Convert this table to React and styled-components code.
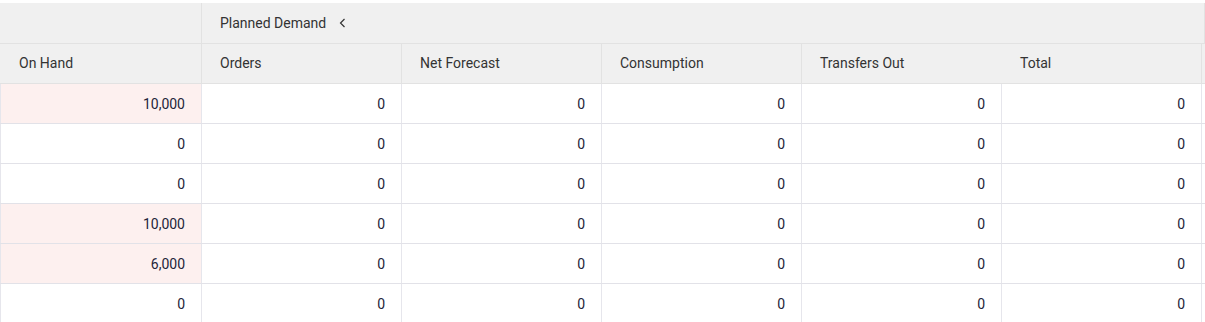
import React from "react";
import styled, { createGlobalStyle } from "styled-components";

const Global = createGlobalStyle`
  html, body { margin: 0; padding: 0; background: #fff; }
  body { font-family: Roboto, "Noto Sans", Arial, sans-serif; }
  * { box-sizing: border-box; }
`;

const Grid = styled.div`
  width: 1205px;
  padding-top: 3px;
  background: #fff;
  font-family: Roboto, Arial, sans-serif;
  font-size: 14px;
`;

const HeaderRow = styled.div`
  display: flex;
  height: ${(p) => p.$h}px;
  background: #f0f0f0;
  border-bottom: 1px solid #e2e2e2;
`;

const BodyRow = styled.div`
  display: flex;
  height: 40px;
  border-bottom: 1px solid #e2e2e8;
`;

const HeadCell = styled.div`
  width: ${(p) => p.$w}px;
  flex: ${(p) => (p.$grow ? "1 1 auto" : "0 0 auto")};
  display: flex;
  align-items: center;
  padding-left: ${(p) => p.$pl ?? 18}px;
  padding-bottom: ${(p) => p.$pb ?? 0}px;
  color: #333;
  font-weight: 400;
  border-right: ${(p) => (p.$noBorder ? "none" : "1px solid #e2e2e2")};
  white-space: nowrap;
`;

const Chevron = styled.svg`
  margin-left: 13px;
  width: 7px;
  height: 10px;
`;

const Cell = styled.div`
  width: ${(p) => p.$w}px;
  flex: 0 0 auto;
  display: flex;
  align-items: center;
  justify-content: flex-end;
  padding-right: ${(p) => p.$pr ?? 16}px;
  color: #24243a;
  background: ${(p) => (p.$pink ? "#fdf0ef" : "#fff")};
  border-left: ${(p) => (p.$first ? "1px solid #e6e6ec" : "none")};
  border-right: 1px solid #e6e6ec;
`;

const Filler = styled.div`
  flex: 1 1 auto;
`;

const onHand = [10000, 0, 0, 10000, 6000, 0];
const cols = ["Orders", "Net Forecast", "Consumption", "Transfers Out", "Total"];

const fmt = (n) => n.toLocaleString("en-US");

export default function App() {
  return (
    <>
      <Global />
      <Grid>
        <HeaderRow $h={41}>
          <HeadCell $w={202} />
          <HeadCell $grow $pl={18}>
            Planned Demand
            <Chevron viewBox="0 0 7 10">
              <path d="M5.5 1 L1.5 5 L5.5 9" fill="none" stroke="#333" strokeWidth="1.2" />
            </Chevron>
          </HeadCell>
        </HeaderRow>
        <HeaderRow $h={40}>
          <HeadCell $w={202} $pl={19} $pb={1}>On Hand</HeadCell>
          {cols.map((c, i) => (
            <HeadCell key={c} $w={200} $pb={1} $noBorder={i === 3}>
              {c}
            </HeadCell>
          ))}
          <Filler />
        </HeaderRow>
        {onHand.map((v, r) => (
          <BodyRow key={r}>
            <Cell $w={202} $first $pink={v > 0} $pr={16}>
              {fmt(v)}
            </Cell>
            {cols.map((c) => (
              <Cell key={c} $w={200}>
                0
              </Cell>
            ))}
            <Filler />
          </BodyRow>
        ))}
      </Grid>
    </>
  );
}
